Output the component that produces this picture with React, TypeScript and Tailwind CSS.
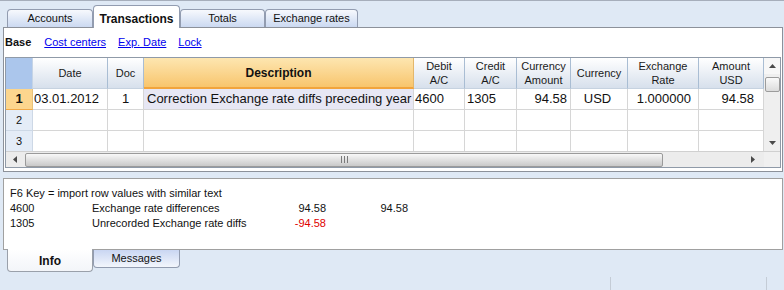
import React from "react";

const cols = [
  { w: "w-[75px]", label: ["Date"], v: "03.01.2012", cls: "justify-start pl-[1px]" },
  { w: "w-[36px]", label: ["Doc"], v: "1", cls: "justify-center" },
  { w: "w-[270px]", label: ["Description"], v: "Correction Exchange rate diffs preceding year", cls: "justify-start pl-[3px]", desc: true },
  { w: "w-[51px]", label: ["Debit", "A/C"], v: "4600", cls: "justify-start pl-[1px]" },
  { w: "w-[52px]", label: ["Credit", "A/C"], v: "1305", cls: "justify-start pl-[2px]" },
  { w: "w-[54px]", label: ["Currency", "Amount"], v: "94.58", cls: "justify-end pr-[3px]" },
  { w: "w-[57px]", label: ["Currency"], v: "USD", cls: "justify-center pr-[3px]" },
  { w: "w-[71px]", label: ["Exchange", "Rate"], v: "1.000000", cls: "justify-end pr-[7px]" },
  { w: "w-[65px]", label: ["Amount", "USD"], v: "94.58", cls: "justify-end pr-[9px]" },
];

function Tri({ dir }: { dir: "up" | "down" | "left" | "right" }) {
  const pts =
    dir === "up"
      ? "0,4 7,4 3.5,0"
      : dir === "down"
      ? "0,0 7,0 3.5,4"
      : dir === "left"
      ? "4,0 4,7 0,3.5"
      : "0,0 0,7 4,3.5";
  const w = dir === "up" || dir === "down" ? 7 : 4;
  const h = dir === "up" || dir === "down" ? 4 : 7;
  return (
    <svg width={w} height={h} viewBox={`0 0 ${w} ${h}`}>
      <polygon points={pts} fill="#4a4a4a" />
    </svg>
  );
}

export default function App() {
  return (
    <div className="w-[784px] h-[290px] bg-[#dfe9f5] flex flex-col font-['Liberation_Sans',Arial,sans-serif] text-[11px] text-[#111] overflow-hidden">
      <div className="h-[1px] bg-[#a6aebb]" />
      {/* top tabs */}
      <div className="h-[26px] flex items-end pl-[7px]">
        <div className="w-[86px] h-[18px] rounded-t-[4px] border border-b-0 border-[#929cb0] bg-gradient-to-b from-[#f7f9fd] to-[#cbd9f1] flex items-center justify-center">
          Accounts
        </div>
        <div className="relative z-10 -mb-[1px] w-[87px] h-[23px] rounded-t-[4px] border border-b-0 border-[#929cb0] bg-white flex items-start pt-[4px] justify-center font-bold text-[12px]">
          Transactions
        </div>
        <div className="w-[85px] h-[18px] rounded-t-[4px] border border-b-0 border-[#929cb0] bg-gradient-to-b from-[#f7f9fd] to-[#cbd9f1] flex items-center justify-center">
          Totals
        </div>
        <div className="w-[93px] h-[18px] rounded-t-[4px] border border-b-0 border-[#929cb0] bg-gradient-to-b from-[#f7f9fd] to-[#cbd9f1] flex items-center justify-center">
          Exchange rates
        </div>
      </div>

      {/* main panel */}
      <div className="ml-[3px] w-[780px] h-[145px] border border-[#8c919a] bg-white">
        <div className="h-[29px] flex items-center pl-[1px] gap-[12px]">
          <span className="font-bold mr-[1px]">Base</span>
          <span className="text-[#0000ee] underline">Cost centers</span>
          <span className="text-[#0000ee] underline">Exp. Date</span>
          <span className="text-[#0000ee] underline">Lock</span>
        </div>
        <div className="ml-[1px] w-[776px] border border-[#8f9aa8] flex flex-col">
          <div className="flex">
            <div className="w-[758px] flex flex-col">
              {/* header */}
              <div className="flex h-[31px]">
                <div className="w-[27px] bg-[#abc6ec] border-r border-[#c5d4e6]" />
                {cols.map((c, i) =>
                  c.desc ? (
                    <div
                      key={i}
                      className={`${c.w} border-r border-[#e3b76c] border-b-2 border-b-[#f2a43c] bg-gradient-to-b from-[#fde6b0] to-[#f8c56c] flex items-center justify-center font-bold text-[12px]`}
                    >
                      {c.label[0]}
                    </div>
                  ) : (
                    <div
                      key={i}
                      className={`${c.w} border-r border-[#a9bdd3] border-b border-b-[#c6d2e0] bg-gradient-to-b from-[#ffffff] to-[#d7e0ec] flex flex-col items-center justify-center leading-[14px] text-[#1a1a1a]`}
                    >
                      {c.label.map((l, j) => (
                        <span key={j}>{l}</span>
                      ))}
                    </div>
                  )
                )}
              </div>
              {/* row 1 */}
              <div className="flex h-[21px] text-[13px]">
                <div className="w-[27px] bg-[#fcd68e] border-r border-[#e8c27a] border-b border-b-[#f1a947] flex items-center justify-center font-bold">
                  1
                </div>
                {cols.map((c, i) => (
                  <div
                    key={i}
                    className={`${c.w} border-r border-b border-[#d6d6d6] flex items-center ${c.cls} ${c.desc ? "bg-[#e7e7f4]" : "bg-white"} whitespace-nowrap overflow-hidden`}
                  >
                    {c.v}
                  </div>
                ))}
              </div>
              {/* row 2 */}
              <div className="flex h-[21px]">
                <div className="w-[27px] bg-[#e4ecf7] border-r border-b border-[#cdd8e6] flex items-center justify-center">
                  2
                </div>
                {cols.map((c, i) => (
                  <div key={i} className={`${c.w} border-r border-b border-[#d6d6d6]`} />
                ))}
              </div>
              {/* row 3 */}
              <div className="flex h-[20px]">
                <div className="w-[27px] bg-[#e4ecf7] border-r border-[#cdd8e6] flex items-center justify-center">
                  3
                </div>
                {cols.map((c, i) => (
                  <div key={i} className={`${c.w} border-r border-[#d6d6d6]`} />
                ))}
              </div>
            </div>
            {/* vertical scrollbar */}
            <div className="w-[16px] h-[93px] bg-[#efefef] flex flex-col items-center">
              <div className="h-[16px] w-full bg-[#f7f7f7] flex items-center justify-center">
                <Tri dir="up" />
              </div>
              <div className="mt-[3px] w-[15px] h-[15px] rounded-[2px] border border-[#9c9c9c] bg-gradient-to-b from-[#fafafa] to-[#dcdcdc]" />
              <div className="flex-1" />
              <div className="h-[16px] w-full flex items-center justify-center">
                <Tri dir="down" />
              </div>
            </div>
          </div>
          {/* horizontal scrollbar */}
          <div className="flex h-[16px] border-t border-[#d0d0d0]">
            <div className="w-[758px] bg-[#ececec] flex items-center">
              <div className="w-[16px] flex items-center justify-center pl-[1px]">
                <Tri dir="left" />
              </div>
              <div className="ml-[3px] w-[638px] h-[14px] rounded-[2px] border border-[#9a9a9a] bg-gradient-to-b from-[#f8f8f8] to-[#c9c9c9] flex items-center justify-center">
                <div className="flex gap-[2px]">
                  <div className="w-[1px] h-[7px] bg-[#7a7a7a]" />
                  <div className="w-[1px] h-[7px] bg-[#7a7a7a]" />
                  <div className="w-[1px] h-[7px] bg-[#7a7a7a]" />
                </div>
              </div>
              <div className="flex-1 flex items-center justify-end pr-[9px]">
                <Tri dir="right" />
              </div>
            </div>
            <div className="w-[16px] bg-[#f0f0f0]" />
          </div>
        </div>
      </div>

      <div className="h-[6px]" />

      {/* info panel */}
      <div className="ml-[3px] w-[780px] h-[72px] border border-[#a0a0a0] bg-white pt-[7px] pl-[6px] leading-[15px] whitespace-nowrap">
        <div>F6 Key = import row values with similar text</div>
        <div className="flex">
          <span className="w-[82px] shrink-0">4600</span>
          <span className="w-[150px] shrink-0">Exchange rate differences</span>
          <span className="w-[84px] shrink-0 text-right">94.58</span>
          <span className="w-[82px] shrink-0 text-right">94.58</span>
        </div>
        <div className="flex">
          <span className="w-[82px] shrink-0">1305</span>
          <span className="w-[150px] shrink-0">Unrecorded Exchange rate diffs</span>
          <span className="w-[84px] shrink-0 text-right text-[#e00000]">-94.58</span>
        </div>
      </div>

      {/* bottom tabs */}
      <div className="relative z-10 -mt-[1px] flex items-start pl-[7px]">
        <div className="w-[86px] h-[23px] rounded-b-[4px] border border-t-0 border-[#9aa0aa] bg-gradient-to-b from-[#ffffff] to-[#f3f5f9] flex items-center justify-center font-bold text-[12px] pt-[1px]">
          Info
        </div>
        <div className="w-[87px] h-[18px] mt-[1px] rounded-b-[4px] border border-t-0 border-[#929cb0] bg-gradient-to-b from-[#c9d6f2] to-[#f3f6fc] flex items-center justify-center">
          Messages
        </div>
      </div>

      <div className="flex-1" />
      <div className="h-[13px] flex">
        <div className="w-[610px]" />
        <div className="w-[156px] border-l border-[#c4ccd6]" />
        <div className="flex-1 border-l border-[#c4ccd6]" />
      </div>
    </div>
  );
}
